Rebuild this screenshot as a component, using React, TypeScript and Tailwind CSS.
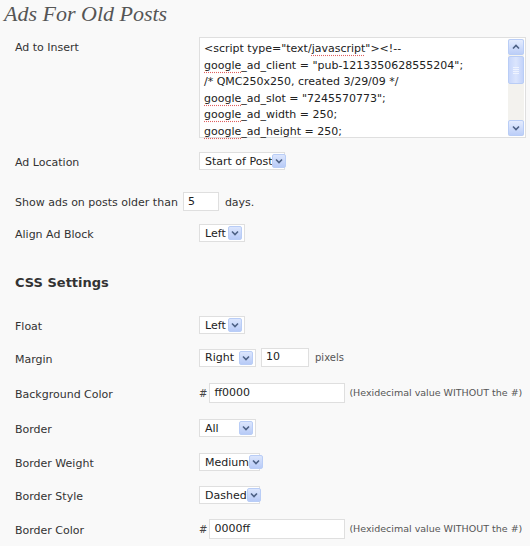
import React from 'react'

const font = "font-['DejaVu_Sans',Verdana,sans-serif]"

function Arrow() {
  return (
    <span className="flex h-[14px] w-[14px] shrink-0 items-center justify-center rounded-[2px] border border-[#b9cdf6] bg-[linear-gradient(#dce6fd,#b8cbf7)]">
      <svg width="8" height="6" viewBox="0 0 8 6">
        <path d="M1 1.5 L4 4.5 L7 1.5" fill="none" stroke="#4d6185" strokeWidth="1.6" />
      </svg>
    </span>
  )
}

function Select({ value, w, gap }: { value: string; w: string; gap?: boolean }) {
  return (
    <div className={`flex h-[18px] shrink-0 items-center whitespace-nowrap border border-[#dfdfdf] bg-white pl-[5px] pr-[2px] ${w}`}>
      <span className="text-[11px] leading-none text-[#222]">{value}</span>
      {gap ? <span className="flex-1" /> : null}
      <Arrow />
    </div>
  )
}

function TextBox({ value, w }: { value: string; w: string }) {
  return (
    <div className={`flex h-[20px] shrink-0 items-center border border-[#dfdfdf] bg-white pl-[4px] text-[11px] text-[#222] ${w}`}>
      {value}
    </div>
  )
}

function Row({ label, mt, children }: { label: string; mt: string; children: React.ReactNode }) {
  return (
    <div className={`flex items-center whitespace-nowrap ${mt}`}>
      <div className="w-[184px] shrink-0 pt-[3px] text-[11px] leading-[13px] text-[#333]">{label}</div>
      <div className="flex items-center">{children}</div>
    </div>
  )
}

const sq = 'underline decoration-dotted decoration-[#e06060] underline-offset-[3px]'

function ScrollBar() {
  return (
    <div className="flex w-[16px] flex-col bg-[#f3f2ee]">
      <div className="flex h-[16px] items-center justify-center rounded-[2px] border border-[#b9cdf6] bg-[linear-gradient(#e4ecfe,#bccef8)]">
        <svg width="8" height="6" viewBox="0 0 8 6">
          <path d="M1 4.5 L4 1.5 L7 4.5" fill="none" stroke="#4d6185" strokeWidth="1.6" />
        </svg>
      </div>
      <div className="mt-[1px] flex h-[28px] flex-col items-center justify-center gap-[1px] rounded-[2px] border border-[#b9cdf6] bg-[linear-gradient(90deg,#c8d7fb,#dbe5fd,#c3d3fa)]">
        <span className="h-px w-[6px] bg-[#eef3ff]" />
        <span className="h-px w-[6px] bg-[#eef3ff]" />
        <span className="h-px w-[6px] bg-[#eef3ff]" />
        <span className="h-px w-[6px] bg-[#eef3ff]" />
      </div>
      <div className="flex-1" />
      <div className="flex h-[16px] items-center justify-center rounded-[2px] border border-[#b9cdf6] bg-[linear-gradient(#e4ecfe,#bccef8)]">
        <svg width="8" height="6" viewBox="0 0 8 6">
          <path d="M1 1.5 L4 4.5 L7 1.5" fill="none" stroke="#4d6185" strokeWidth="1.6" />
        </svg>
      </div>
    </div>
  )
}

export default function App() {
  return (
    <div className={`h-[546px] w-[530px] overflow-hidden bg-[#f9f9f9] ${font}`}>
      <h2 className="h-[28px] pl-[4px] pt-[2px] font-['Liberation_Serif',serif] text-[22px] italic leading-[24px] whitespace-nowrap text-[#555]">
        Ads For Old Posts
      </h2>

      <div className="pl-[15px]">
        <div className="mt-[9px] flex items-start">
          <div className="w-[184px] shrink-0 pt-[3px] text-[11px] text-[#333]">Ad to Insert</div>
          <div className="flex h-[101px] w-[327px] border border-[#dfdfdf] bg-white p-[1px]">
            <div className="flex-1 pl-[3px] pt-[2px] text-[11px] leading-[16.5px] whitespace-nowrap text-[#222]">
              <div>
                &lt;script type="text/<span className={sq}>javascript</span>"&gt;&lt;!--
              </div>
              <div>
                <span className={sq}>google</span>_ad_client = "pub-1213350628555204";
              </div>
              <div>/* QMC250x250, created 3/29/09 */</div>
              <div>
                <span className={sq}>google</span>_ad_slot = "7245570773";
              </div>
              <div>
                <span className={sq}>google</span>_ad_width = 250;
              </div>
              <div>
                <span className={sq}>google</span>_ad_height = 250;
              </div>
            </div>
            <ScrollBar />
          </div>
        </div>

        <Row label="Ad Location" mt="mt-[14px]">
          <Select value="Start of Post" w="w-[86px]" />
        </Row>

        <div className="mt-[22px] flex h-[18px] items-center whitespace-nowrap text-[11px] leading-[13px] text-[#333]">
          <span className="pt-[3px]">Show ads on posts older than</span>
          <div className="ml-[5px] flex h-[19px] w-[36px] items-center border border-[#dfdfdf] bg-white pl-[4px] text-[#222]">5</div>
          <span className="ml-[6px] pt-[3px]">days.</span>
        </div>

        <Row label="Align Ad Block" mt="mt-[14px]">
          <Select value="Left" w="w-[46px]" gap />
        </Row>

        <h3 className="mt-[32px] h-[18px] text-[13px] leading-[18px] font-bold text-[#333]">CSS Settings</h3>

        <Row label="Float" mt="mt-[24px]">
          <Select value="Left" w="w-[46px]" gap />
        </Row>

        <Row label="Margin" mt="mt-[14px]">
          <Select value="Right" w="w-[57px]" gap />
          <div className="ml-[5px] flex h-[19px] w-[48px] items-center border border-[#dfdfdf] bg-white pl-[4px] text-[11px] text-[#222]">10</div>
          <span className="ml-[6px] text-[10px] text-[#555]">pixels</span>
        </Row>

        <Row label="Background Color" mt="mt-[16px]">
          <span className="mr-[2px] text-[10px] text-[#444]">#</span>
          <TextBox value="ff0000" w="w-[136px]" />
          <span className="ml-[4px] text-[9.5px] text-[#555]">(Hexidecimal value WITHOUT the #)</span>
        </Row>

        <Row label="Border" mt="mt-[16px]">
          <Select value="All" w="w-[57px]" gap />
        </Row>

        <Row label="Border Weight" mt="mt-[16px]">
          <Select value="Medium" w="w-[61px]" />
        </Row>

        <Row label="Border Style" mt="mt-[15px]">
          <Select value="Dashed" w="w-[61px]" />
        </Row>

        <Row label="Border Color" mt="mt-[15px]">
          <span className="mr-[2px] text-[10px] text-[#444]">#</span>
          <TextBox value="0000ff" w="w-[136px]" />
          <span className="ml-[4px] text-[9.5px] text-[#555]">(Hexidecimal value WITHOUT the #)</span>
        </Row>
      </div>
    </div>
  )
}
